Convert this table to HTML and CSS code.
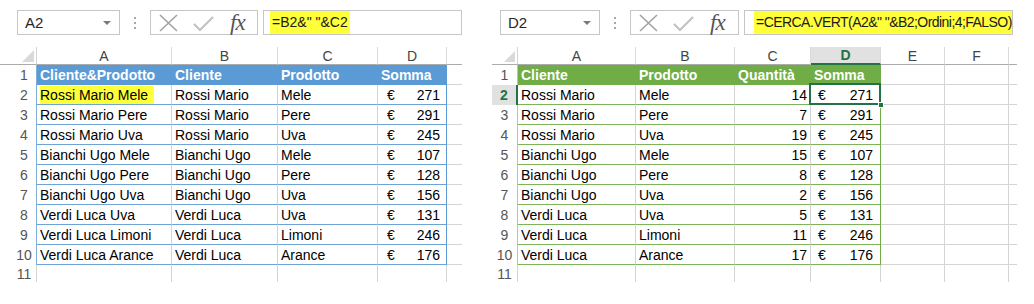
FILE: index.html
```html
<!DOCTYPE html>
<html lang="it">
<head>
<meta charset="utf-8">
<title>CERCA.VERT con chiave concatenata</title>
<link rel="stylesheet" href="styles.css">
</head>
<body>
<div class="page">

  <section class="panel panel-l">
    <div class="bar">
      <div class="namebox"><span>A2</span><span class="caret"></span></div>
      <div class="dots"><i></i><i></i><i></i></div>
      <div class="fxbox">
        <svg class="fxicons" width="70" height="23" viewBox="0 0 70 23">
          <path d="M9 4 L26 20 M26 4 L9 20" stroke="#A3A3A3" stroke-width="1.6" fill="none"/>
          <path d="M43 13 L49 19 L62 6" stroke="#C2C2C2" stroke-width="2.2" fill="none"/>
        </svg>
        <span class="fx">fx</span>
      </div>
      <div class="formula"><span class="mark">=B2&amp;" "&amp;C2</span></div>
    </div>

    <div class="sheet sheet-l">
      <div class="corner"><span class="tri"></span></div>
      <div class="ch">A</div><div class="ch">B</div><div class="ch">C</div><div class="ch">D</div><div class="ch ch-x"></div>

      <div class="rh rh-l">1</div>
      <div class="c hd-l">Cliente&amp;Prodotto</div><div class="c hd-l">Cliente</div><div class="c hd-l">Prodotto</div><div class="c hd-l">Somma</div><div class="c x"></div>

      <div class="rh rh-l">2</div>
      <div class="c tl"><span class="hl">Rossi Mario Mele</span></div><div class="c tl">Rossi Mario</div><div class="c tl">Mele</div><div class="c tl acc end-l"><span>€</span><span>271</span></div><div class="c x"></div>

      <div class="rh rh-l">3</div>
      <div class="c tl">Rossi Mario Pere</div><div class="c tl">Rossi Mario</div><div class="c tl">Pere</div><div class="c tl acc end-l"><span>€</span><span>291</span></div><div class="c x"></div>

      <div class="rh rh-l">4</div>
      <div class="c tl">Rossi Mario Uva</div><div class="c tl">Rossi Mario</div><div class="c tl">Uva</div><div class="c tl acc end-l"><span>€</span><span>245</span></div><div class="c x"></div>

      <div class="rh rh-l">5</div>
      <div class="c tl">Bianchi Ugo Mele</div><div class="c tl">Bianchi Ugo</div><div class="c tl">Mele</div><div class="c tl acc end-l"><span>€</span><span>107</span></div><div class="c x"></div>

      <div class="rh rh-l">6</div>
      <div class="c tl">Bianchi Ugo Pere</div><div class="c tl">Bianchi Ugo</div><div class="c tl">Pere</div><div class="c tl acc end-l"><span>€</span><span>128</span></div><div class="c x"></div>

      <div class="rh rh-l">7</div>
      <div class="c tl">Bianchi Ugo Uva</div><div class="c tl">Bianchi Ugo</div><div class="c tl">Uva</div><div class="c tl acc end-l"><span>€</span><span>156</span></div><div class="c x"></div>

      <div class="rh rh-l">8</div>
      <div class="c tl">Verdi Luca Uva</div><div class="c tl">Verdi Luca</div><div class="c tl">Uva</div><div class="c tl acc end-l"><span>€</span><span>131</span></div><div class="c x"></div>

      <div class="rh rh-l">9</div>
      <div class="c tl">Verdi Luca Limoni</div><div class="c tl">Verdi Luca</div><div class="c tl">Limoni</div><div class="c tl acc end-l"><span>€</span><span>246</span></div><div class="c x"></div>

      <div class="rh rh-l">10</div>
      <div class="c tl">Verdi Luca Arance</div><div class="c tl">Verdi Luca</div><div class="c tl">Arance</div><div class="c tl acc end-l"><span>€</span><span>176</span></div><div class="c x"></div>

      <div class="rh rh-l last">11</div>
      <div class="c last"></div><div class="c last"></div><div class="c last"></div><div class="c last"></div><div class="c last x"></div>
    </div>
  </section>

  <section class="panel panel-r">
    <div class="bar">
      <div class="namebox"><span>D2</span><span class="caret"></span></div>
      <div class="dots"><i></i><i></i><i></i></div>
      <div class="fxbox">
        <svg class="fxicons" width="70" height="23" viewBox="0 0 70 23">
          <path d="M9 4 L26 20 M26 4 L9 20" stroke="#A3A3A3" stroke-width="1.6" fill="none"/>
          <path d="M43 13 L49 19 L62 6" stroke="#C2C2C2" stroke-width="2.2" fill="none"/>
        </svg>
        <span class="fx">fx</span>
      </div>
      <div class="formula"><span class="mark mark-long">=CERCA.VERT(A2&amp;" "&amp;B2;Ordini;4;FALSO)</span></div>
    </div>

    <div class="sheet sheet-r">
      <div class="corner"><span class="tri"></span></div>
      <div class="ch">A</div><div class="ch">B</div><div class="ch">C</div><div class="ch ch-sel">D</div><div class="ch">E</div><div class="ch">F</div><div class="ch ch-x"></div>

      <div class="rh rh-r">1</div>
      <div class="c hd-r">Cliente</div><div class="c hd-r">Prodotto</div><div class="c hd-r">Quantità</div><div class="c hd-r">Somma</div><div class="c"></div><div class="c"></div><div class="c x"></div>

      <div class="rh rh-r rh-sel">2</div>
      <div class="c tr">Rossi Mario</div><div class="c tr">Mele</div><div class="c tr num">14</div><div class="c tr acc end-r sel"><span>€</span><span>271</span><i class="handle"></i></div><div class="c"></div><div class="c"></div><div class="c x"></div>

      <div class="rh rh-r">3</div>
      <div class="c tr">Rossi Mario</div><div class="c tr">Pere</div><div class="c tr num">7</div><div class="c tr acc end-r"><span>€</span><span>291</span></div><div class="c"></div><div class="c"></div><div class="c x"></div>

      <div class="rh rh-r">4</div>
      <div class="c tr">Rossi Mario</div><div class="c tr">Uva</div><div class="c tr num">19</div><div class="c tr acc end-r"><span>€</span><span>245</span></div><div class="c"></div><div class="c"></div><div class="c x"></div>

      <div class="rh rh-r">5</div>
      <div class="c tr">Bianchi Ugo</div><div class="c tr">Mele</div><div class="c tr num">15</div><div class="c tr acc end-r"><span>€</span><span>107</span></div><div class="c"></div><div class="c"></div><div class="c x"></div>

      <div class="rh rh-r">6</div>
      <div class="c tr">Bianchi Ugo</div><div class="c tr">Pere</div><div class="c tr num">8</div><div class="c tr acc end-r"><span>€</span><span>128</span></div><div class="c"></div><div class="c"></div><div class="c x"></div>

      <div class="rh rh-r">7</div>
      <div class="c tr">Bianchi Ugo</div><div class="c tr">Uva</div><div class="c tr num">2</div><div class="c tr acc end-r"><span>€</span><span>156</span></div><div class="c"></div><div class="c"></div><div class="c x"></div>

      <div class="rh rh-r">8</div>
      <div class="c tr">Verdi Luca</div><div class="c tr">Uva</div><div class="c tr num">5</div><div class="c tr acc end-r"><span>€</span><span>131</span></div><div class="c"></div><div class="c"></div><div class="c x"></div>

      <div class="rh rh-r">9</div>
      <div class="c tr">Verdi Luca</div><div class="c tr">Limoni</div><div class="c tr num">11</div><div class="c tr acc end-r"><span>€</span><span>246</span></div><div class="c"></div><div class="c"></div><div class="c x"></div>

      <div class="rh rh-r">10</div>
      <div class="c tr">Verdi Luca</div><div class="c tr">Arance</div><div class="c tr num">17</div><div class="c tr acc end-r"><span>€</span><span>176</span></div><div class="c"></div><div class="c"></div><div class="c x"></div>

      <div class="rh rh-r last">11</div>
      <div class="c last"></div><div class="c last"></div><div class="c last"></div><div class="c last"></div><div class="c last"></div><div class="c last"></div><div class="c last x"></div>
    </div>
  </section>

</div>
</body>
</html>
```

FILE: styles.css
```css
* { box-sizing: border-box; }

body {
  margin: 0;
  background: #ffffff;
  font-family: "Liberation Sans", Arial, sans-serif;
  font-size: 14px;
  color: #000;
}

.page {
  display: flex;
  width: 1034px;
  height: 304px;
  overflow: hidden;
}

.panel-l { width: 462px; }
.panel-r { width: 542px; margin-left: 30px; }

/* ---------- formula bar ---------- */
.bar {
  display: flex;
  align-items: center;
  height: 25px;
  margin-top: 10px;
  margin-bottom: 12px;
}

.namebox {
  height: 25px;
  border: 1px solid #C6C6C6;
  display: flex;
  align-items: center;
  justify-content: space-between;
  padding: 0 8px 0 7px;
  font-size: 15px;
  color: #262626;
}
.panel-l .namebox { margin-left: 17px; width: 103px; }
.panel-r .namebox { margin-left: 8px; width: 100px; }

.caret {
  width: 0;
  height: 0;
  border-left: 4px solid transparent;
  border-right: 4px solid transparent;
  border-top: 4px solid #7A7A7A;
}

.dots {
  width: 30px;
  display: flex;
  flex-direction: column;
  align-items: center;
  gap: 3px;
}
.dots i {
  width: 2px;
  height: 2px;
  background: #A8A8A8;
}

.fxbox {
  height: 25px;
  width: 108px;
  border: 1px solid #C6C6C6;
  display: flex;
  align-items: center;
}
.panel-r .fxbox { width: 109px; }

.fx {
  font-family: "Liberation Serif", "Times New Roman", serif;
  font-style: italic;
  font-size: 23px;
  color: #555;
  margin-left: 9px;
  line-height: 1;
  letter-spacing: -1px;
}

.formula {
  flex: 1;
  height: 25px;
  margin-left: 5px;
  border: 1px solid #C6C6C6;
  display: flex;
  align-items: center;
  padding-left: 6px;
  font-size: 14px;
  color: #1a1a1a;
  white-space: nowrap;
  overflow: hidden;
}
.panel-r .formula { margin-right: 21px; padding-left: 9px; }

.mark {
  background: #FFFF3A;
  padding: 4px 2px 5px 2px;
}
.mark-long {
  letter-spacing: -0.55px;
  padding-right: 4px;
}

/* ---------- sheet grid ---------- */
.sheet {
  display: grid;
  grid-template-rows: 18px repeat(10, 20px) 17px;
}
.sheet-l { grid-template-columns: 37px 135px 106px 100px 69px 15px; }
.sheet-r { grid-template-columns: 26px 118px 99px 76px 70px 64px 64px 8px; }

.corner {
  position: relative;
  border-right: 1px solid #D4D4D4;
  border-bottom: 1px solid #ABABAB;
}
.corner .tri {
  position: absolute;
  right: 2px;
  bottom: 2px;
  width: 0;
  height: 0;
  border-left: 12px solid transparent;
  border-bottom: 12px solid #D9D9D9;
}
.sheet-r .corner .tri { border-left-width: 11px; border-bottom-width: 11px; }

.ch {
  display: flex;
  align-items: center;
  justify-content: center;
  color: #444;
  font-size: 14px;
  border-right: 1px solid #D9D9D9;
  border-bottom: 1px solid #ABABAB;
}
.ch-x { border-right: none; }
.ch-sel {
  background: #E1E1E1;
  color: #217346;
  font-weight: bold;
  border-bottom: 2px solid #217346;
}

.rh {
  display: flex;
  align-items: center;
  justify-content: center;
  color: #555;
  font-size: 14px;
  border-right: 1px solid #C0C0C0;
}
.rh-l { padding-left: 12px; }
.rh-sel {
  background: #E1E1E1;
  color: #217346;
  font-weight: bold;
  border-right: 2px solid #217346;
}

.c {
  display: flex;
  align-items: center;
  padding: 0 3px;
  white-space: nowrap;
  overflow: hidden;
  border-right: 1px solid #D4D4D4;
  border-bottom: 1px solid #D4D4D4;
}
.c.x { border-right: none; }
.c.last { border-bottom: none; }
.rh.last { border-right-color: #D4D4D4; }

/* left table: blue */
.hd-l {
  background: #5B9BD5;
  color: #fff;
  font-weight: bold;
  border-bottom-color: #5B9BD5;
  border-right-color: #5B9BD5;
}
.tl { border-bottom-color: #6FA3D6; }
.end-l { border-right-color: #5B9BD5; }
.rh-l:not(.last) { border-right-color: #7FAFDD; }

/* right table: green */
.hd-r {
  background: #70AD47;
  color: #fff;
  font-weight: bold;
  border-bottom-color: #70AD47;
  border-right-color: #70AD47;
}
.tr { border-bottom-color: #7FB35A; }
.end-r { border-right-color: #70AD47; }

.num { justify-content: flex-end; }

.acc { justify-content: space-between; }
.sheet-l .acc { padding: 0 6px 0 9px; }
.sheet-r .acc { padding: 0 7px 0 7px; }

.hl {
  background: #FFFF3A;
  padding: 1px 6px 1px 0;
}

.sel {
  position: relative;
  overflow: visible;
}
.sel::after {
  content: "";
  position: absolute;
  left: -2px;
  top: -2px;
  right: -1px;
  bottom: -1px;
  border: 2px solid #217346;
  pointer-events: none;
}
.handle {
  position: absolute;
  right: -4px;
  bottom: -4px;
  width: 6px;
  height: 6px;
  background: #217346;
  border: 1px solid #fff;
  z-index: 2;
}
```
